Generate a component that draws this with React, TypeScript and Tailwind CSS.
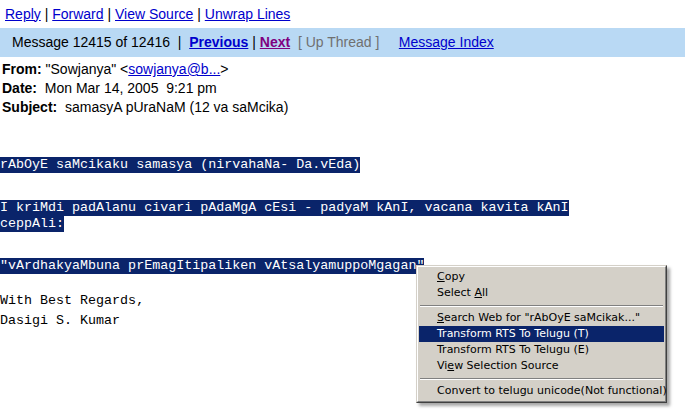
const links = ["Reply", "Forward", "View Source", "Unwrap Lines"];

type MenuEntry = { label: React.ReactNode; active?: boolean } | "sep";

const menu: MenuEntry[] = [
	{ label: <><u>C</u>opy</> },
	{ label: <>Select <u>A</u>ll</> },
	"sep",
	{ label: <><u>S</u>earch Web for "rAbOyE saMcikak..."</> },
	{ label: "Transform RTS To Telugu (T)", active: true },
	{ label: "Transform RTS To Telugu (E)" },
	{ label: <>Vi<u>e</u>w Selection Source</> },
	"sep",
	{ label: "Convert to telugu unicode(Not functional)" },
];

function Sel({ children }: { children: string }) {
	return (
		<span className="inline-block h-[16px] whitespace-pre bg-[#0a246a] leading-[16px] text-white">{children}</span>
	);
}

function ContextMenu() {
	return (
		<div className="absolute left-[416px] top-[265px] w-[251px] border border-t-[#d4d0c8] border-l-[#d4d0c8] border-r-[#404040] border-b-[#404040] bg-[#d4d0c8] shadow-[3px_3px_3px_rgba(0,0,0,0.35)]">
			<div className="border border-t-white border-l-white border-r-[#808080] border-b-[#808080] px-px py-[2px] font-['DejaVu_Sans',sans-serif] text-[11px] text-black">
				{menu.map((item, i) =>
					item === "sep" ? (
						<div key={i} className="flex h-[9px] items-center px-px">
							<div className="h-[2px] w-full border-t border-b border-t-[#808080] border-b-white" />
						</div>
					) : (
						<div
							key={i}
							className={
								item.active
									? "flex h-[16px] items-center bg-[#0a246a] pl-[18px] text-white"
									: "flex h-[16px] items-center pl-[18px]"
							}
						>
							<span className="whitespace-pre">{item.label}</span>
						</div>
					)
				)}
			</div>
		</div>
	);
}

export default function App() {
	return (
		<div className="relative h-[417px] w-[685px] overflow-hidden bg-white font-['Liberation_Sans',Arial,sans-serif] text-[13px] text-black">
			<div className="flex h-[28px] items-center pl-[5px] text-[14px]">
				{links.map((l, i) => (
					<span key={l} className="whitespace-pre">
						{i > 0 && " | "}
						<a className="text-[#0000cc] underline">{l}</a>
					</span>
				))}
			</div>

			<div className="flex h-[29px] items-center bg-[#b9d9f4] pl-[12px] text-[14px]">
				<span className="whitespace-pre">Message 12415 of 12416  |  </span>
				<a className="font-bold text-[#0000cc] underline">Previous</a>
				<span className="whitespace-pre"> | </span>
				<a className="font-bold text-[#800080] underline">Next</a>
				<span className="whitespace-pre text-[#707070]">  [ Up Thread ]     </span>
				<a className="text-[#0000cc] underline">Message Index</a>
			</div>

			<div className="flex flex-col pl-[2px] pt-[3px] text-[14px] leading-[19px]">
				<div className="whitespace-pre">
					<b>From:</b> {'"Sowjanya" <'}
					<a className="text-[#0000cc] underline">sowjanya@b...</a>
					{">"}
				</div>
				<div className="whitespace-pre">
					<b>Date:</b>  Mon Mar 14, 2005  9:21 pm
				</div>
				<div className="whitespace-pre">
					<b>Subject:</b>  samasyA pUraNaM (12 va saMcika)
				</div>
			</div>

			<div className="flex flex-col font-['Courier_New','Liberation_Mono',monospace] text-[13.35px] leading-[16px]">
				<div className="mt-[40px]">
					<Sel>rAbOyE saMcikaku samasya (nirvahaNa- Da.vEda)</Sel>
				</div>
				<div className="mt-[27px]">
					<Sel>I kriMdi padAlanu civari pAdaMgA cEsi - padyaM kAnI, vacana kavita kAnI</Sel>
				</div>
				<div>
					<Sel>ceppAli:</Sel>
				</div>
				<div className="mt-[26px]">
					<Sel>"vArdhakyaMbuna prEmagItipaliken vAtsalyamuppoMgagan"</Sel>
				</div>
				<div className="mt-[17px] h-[20px] leading-[20px]">With Best Regards,</div>
				<div className="h-[20px] leading-[20px]">Dasigi S. Kumar</div>
			</div>

			<ContextMenu />
		</div>
	);
}
